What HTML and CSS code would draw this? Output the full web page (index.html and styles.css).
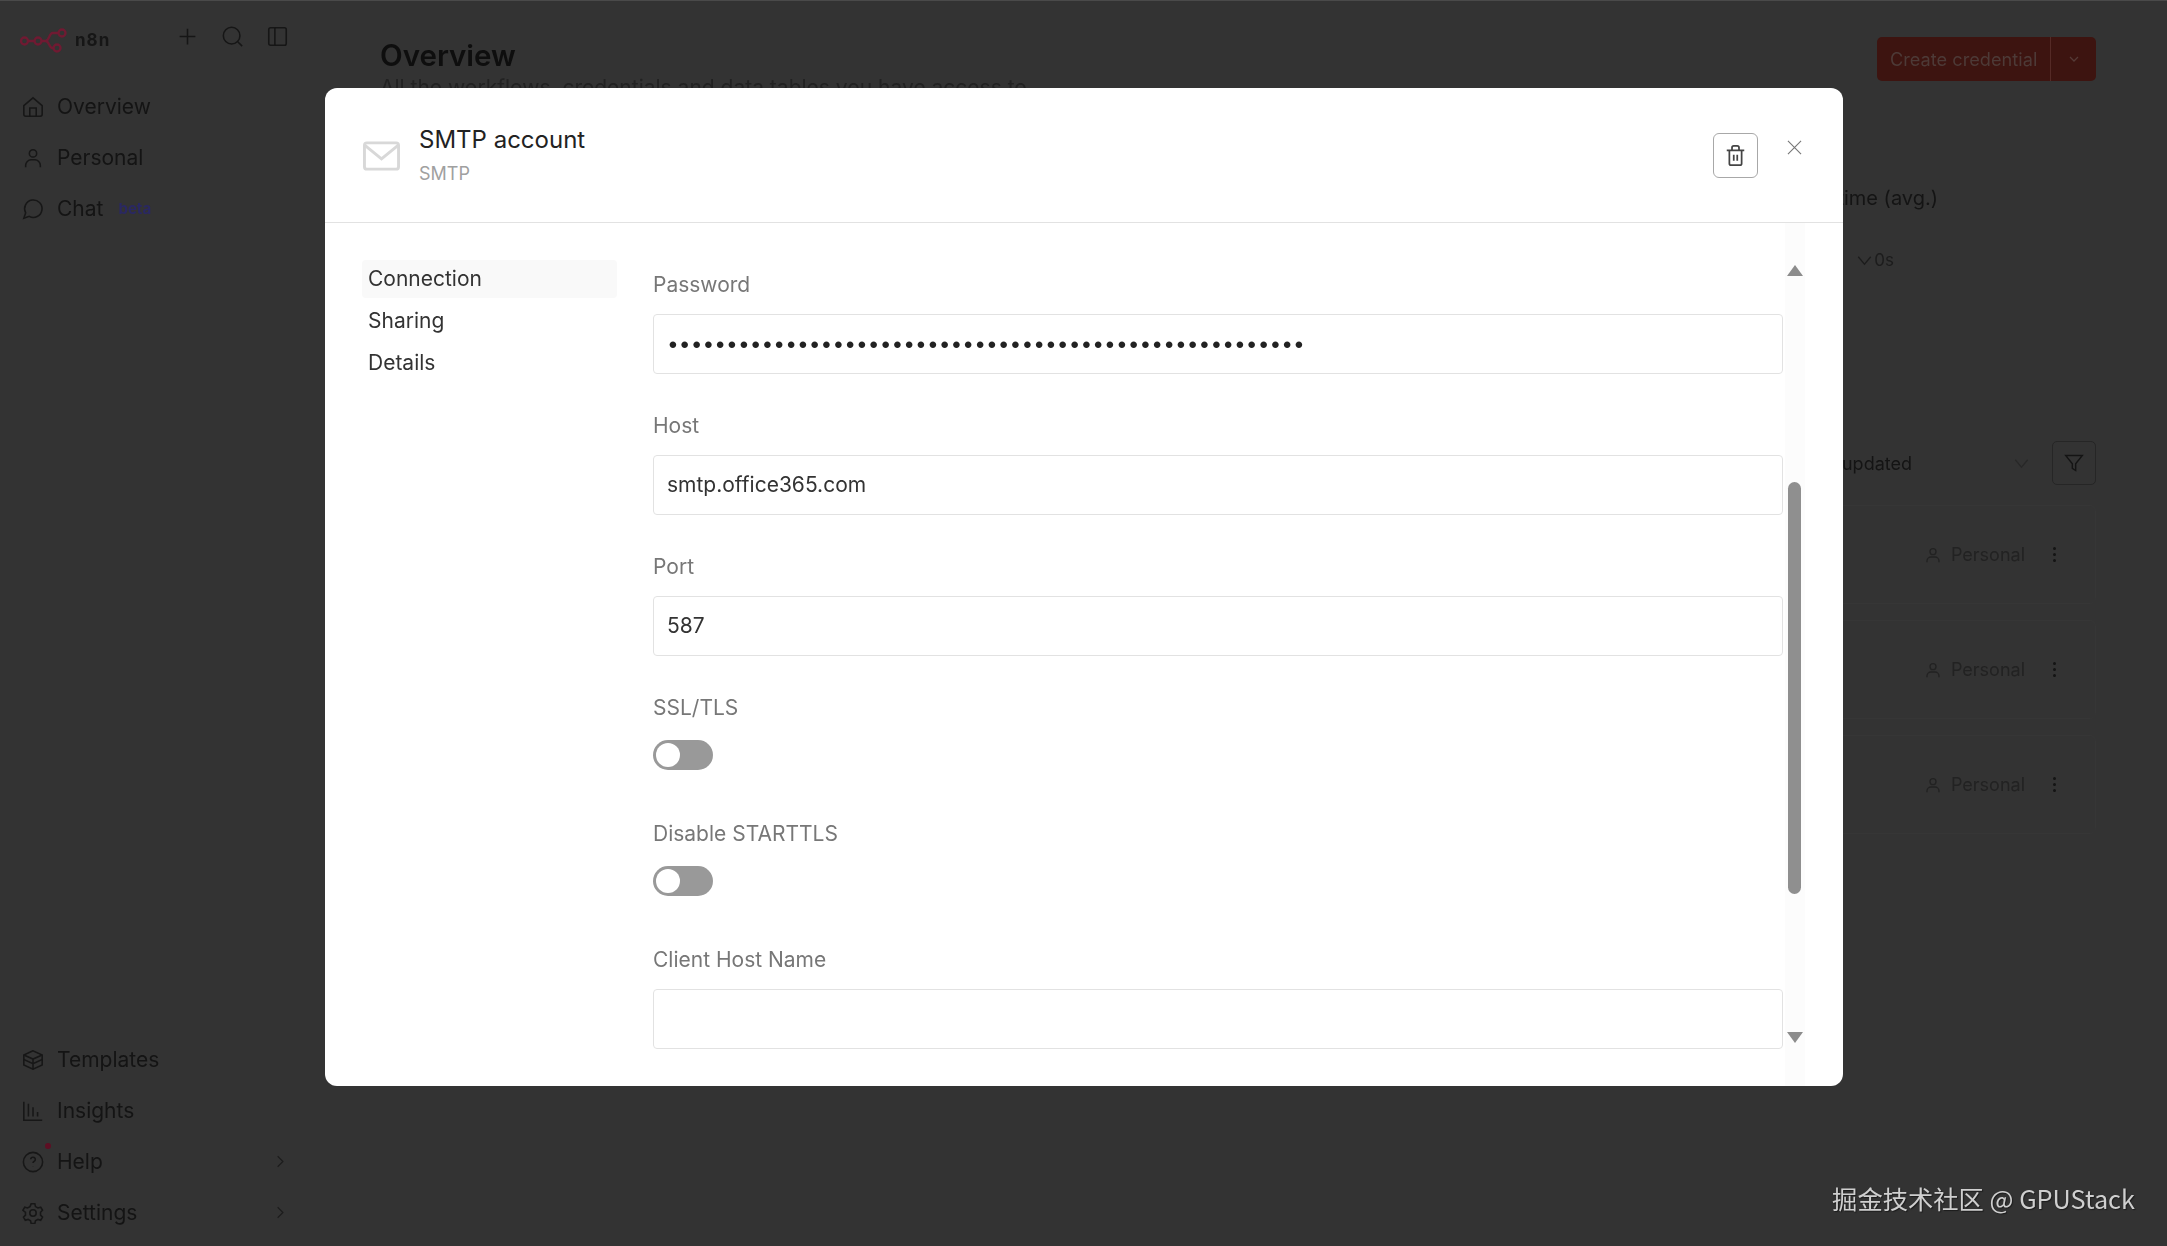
FILE: index.html
```html
<!DOCTYPE html>
<html lang="en">
<head>
<meta charset="utf-8">
<title>SMTP account</title>
<link rel="stylesheet" href="styles.css">
</head>
<body>
<div class="app">
  <aside class="sidebar">
    <div class="side-top">
      <div class="brand">
        <svg class="logo" viewBox="0 0 47 25" fill="none" stroke="#701a32" stroke-width="2.300"><circle cx="4.500" cy="13" r="3.500"/><circle cx="18" cy="13" r="3.500"/><circle cx="42" cy="5" r="3.500"/><circle cx="37" cy="20" r="3.500"/><path d="M8 13h6.500M21.500 13h4M38.500 5h-6c-3.500 0-3 8-7 8 4 0 3.500 7 7 7h1"/></svg>
        <span class="brand-name">n8n</span>
        <div class="brand-tools">
          <svg class="tool" viewBox="0 0 24 24"><path d="M12 3v18M3 12h18"/></svg>
          <svg class="tool" viewBox="0 0 24 24"><circle cx="11" cy="11" r="9.500"/><path d="M18 18l5 5"/></svg>
          <svg class="tool" viewBox="0 0 24 24"><rect x="2" y="2" width="20" height="20" rx="2"/><path d="M9 2v20"/></svg>
        </div>
      </div>
      <nav class="nav">
        <a class="nav-item"><svg class="nav-icon" viewBox="0 0 24 24"><path d="M2 10.500 12 2l10 8.500V20a2 2 0 0 1-2 2H4a2 2 0 0 1-2-2z"/><path d="M8.500 22v-9h7v9"/></svg>Overview</a>
        <a class="nav-item"><svg class="nav-icon" viewBox="0 0 24 24"><circle cx="12" cy="7" r="4"/><path d="M4 22v-2a6 6 0 0 1 6-6h4a6 6 0 0 1 6 6v2"/></svg>Personal</a>
        <a class="nav-item"><svg class="nav-icon" viewBox="0 0 24 24"><path d="M7.900 20A9.500 9.500 0 1 0 4 16.100L2 22z"/></svg>Chat<span class="beta">beta</span></a>
      </nav>
    </div>
    <nav class="nav">
      <a class="nav-item"><svg class="nav-icon" viewBox="0 0 24 24"><path d="M12 2 2 6.500v11L12 22l10-4.500v-11z"/><path d="M2 6.500 12 11l10-4.500M12 11v11M2 11.500l10 4.500 10-4.500"/></svg>Templates</a>
      <a class="nav-item"><svg class="nav-icon" viewBox="0 0 24 24"><path d="M2 2v20h20M7 4v14M12 8v10M17 13v5"/></svg>Insights</a>
      <a class="nav-item"><span class="help-wrap"><svg class="nav-icon" viewBox="0 0 24 24"><circle cx="12" cy="12" r="10.500"/><path d="M9.500 9a2.500 2.500 0 0 1 5 .5c0 1.700-2.500 2-2.500 3.500M12 17v.1"/></svg><span class="notify"></span></span>Help<svg class="nav-chevron" viewBox="0 0 24 24"><path d="m8 3 9 9-9 9"/></svg></a>
      <a class="nav-item"><svg class="nav-icon" viewBox="0 0 24 24"><circle cx="12" cy="12" r="3.500"/><path d="M10 2h4l.7 3 2.700 1.500 3-.9 2 3.400-2.200 2.200v3.100l2.200 2.200-2 3.400-3-.9-2.700 1.500-.7 3h-4l-.7-3-2.700-1.500-3 .9-2-3.400 2.200-2.200v-3.100L1 9l2-3.400 3 .9L8.700 5z"/></svg>Settings<svg class="nav-chevron" viewBox="0 0 24 24"><path d="m8 3 9 9-9 9"/></svg></a>
    </nav>
  </aside>
  <main class="main">
    <header class="page-head">
      <div>
        <h1 class="page-title">Overview</h1>
        <p class="page-sub">All the workflows, credentials and data tables you have access to</p>
      </div>
      <div class="create-btn"><span class="create-label">Create credential</span><span class="create-more"><svg class="create-chevron" viewBox="0 0 24 24"><path d="m4 8 8 8 8-8"/></svg></span></div>
    </header>
    <section class="stat">
      <div class="stat-label">Run time (avg.)</div>
      <div class="stat-value"><svg class="stat-chevron" viewBox="0 0 24 24"><path d="m2 6 10 12L22 6"/></svg>0s</div>
    </section>
    <section class="filters">
      <div class="sort"><span>Sort by last updated</span><svg class="sort-chevron" viewBox="0 0 24 24"><path d="m2 6 10 12L22 6"/></svg></div>
      <div class="filter-btn"><svg class="filter-icon" viewBox="0 0 24 24"><path d="M2 3h20l-8 10v8l-4-2.500V13z"/></svg></div>
    </section>
    <section class="rows">
      <div class="row"><svg class="row-icon" viewBox="0 0 24 24"><circle cx="12" cy="7" r="4.500"/><path d="M3 23v-2a6 6 0 0 1 6-6h6a6 6 0 0 1 6 6v2"/></svg><span class="row-text">Personal</span><span class="kebab"><i></i><i></i><i></i></span></div>
      <div class="row"><svg class="row-icon" viewBox="0 0 24 24"><circle cx="12" cy="7" r="4.500"/><path d="M3 23v-2a6 6 0 0 1 6-6h6a6 6 0 0 1 6 6v2"/></svg><span class="row-text">Personal</span><span class="kebab"><i></i><i></i><i></i></span></div>
      <div class="row"><svg class="row-icon" viewBox="0 0 24 24"><circle cx="12" cy="7" r="4.500"/><path d="M3 23v-2a6 6 0 0 1 6-6h6a6 6 0 0 1 6 6v2"/></svg><span class="row-text">Personal</span><span class="kebab"><i></i><i></i><i></i></span></div>
    </section>
  </main>
</div>

<div class="backdrop">
  <div class="modal">
    <header class="modal-head">
      <svg class="mail-icon" viewBox="0 0 38 30" fill="none"><rect x="1.500" y="1.500" width="35" height="27" rx="2.500"/><path d="m2 4 17 14L36 4"/></svg>
      <div class="modal-titles">
        <div class="modal-title">SMTP account</div>
        <div class="modal-subtitle">SMTP</div>
      </div>
      <button class="trash-btn" type="button"><svg class="trash-icon" viewBox="0 0 24 24"><path d="M2 6h20M5 6v15a2 2 0 0 0 2 2h10a2 2 0 0 0 2-2V6M8 6V3a2 2 0 0 1 2-2h4a2 2 0 0 1 2 2v3M10 11v7M14 11v7"/></svg></button>
      <svg class="close-icon" viewBox="0 0 16 16"><path d="m1 1 14 14M15 1 1 15"/></svg>
    </header>
    <div class="modal-body">
      <nav class="tabs">
        <a class="tab tab-active">Connection</a>
        <a class="tab">Sharing</a>
        <a class="tab">Details</a>
      </nav>
      <form class="form">
        <div class="field">
          <label class="label">Password</label>
          <div class="input input-secret">••••••••••••••••••••••••••••••••••••••••••••••••••••••</div>
        </div>
        <div class="field">
          <label class="label">Host</label>
          <div class="input">smtp.office365.com</div>
        </div>
        <div class="field">
          <label class="label">Port</label>
          <div class="input">587</div>
        </div>
        <div class="field field-toggle">
          <label class="label">SSL/TLS</label>
          <span class="toggle"><span class="knob"></span></span>
        </div>
        <div class="field field-toggle">
          <label class="label">Disable STARTTLS</label>
          <span class="toggle"><span class="knob"></span></span>
        </div>
        <div class="field">
          <label class="label">Client Host Name</label>
          <div class="input"></div>
        </div>
      </form>
      <div class="scrollbar">
        <span class="arrow arrow-up"></span>
        <span class="thumb"></span>
        <span class="arrow arrow-down"></span>
      </div>
    </div>
  </div>
</div>
<div class="watermark">掘金技术社区 @ GPUStack</div>
</body>
</html>
```

FILE: styles.css
```css
* { box-sizing: border-box; }
html, body { margin: 0; height: 100%; }
body {
  background: #333333;
  font-family: Inter, "Noto Sans", sans-serif;
  color: #1a1a1a;
  overflow: hidden;
  border-top: 1px solid #4a4a4a;
}
svg { display: block; }

/* Page behind the dialog */
.app {
  display: flex;
  height: 1245px;
  filter: blur(0.3px);
}
.sidebar {
  width: 305px;
  flex: none;
  display: flex;
  flex-direction: column;
  justify-content: space-between;
  padding: 0 0 8px 0;
}
.brand {
  display: flex;
  align-items: center;
  height: 80px;
  padding-left: 20px;
}
.logo { width: 47px; height: 25px; margin-top: -2px; }
.brand-name {
  margin-left: 8px;
  margin-top: -2px;
  font-size: 17px;
  font-weight: 700;
  letter-spacing: 1px;
  color: #161616;
}
.brand-tools {
  display: flex;
  gap: 24px;
  margin-left: 67px;
  margin-top: -10px;
  align-items: center;
}
.tool { width: 21px; height: 21px; fill: none; stroke: #161616; stroke-width: 1.800; }
.nav { display: flex; flex-direction: column; }
.nav-item {
  display: flex;
  align-items: center;
  height: 51px;
  padding-left: 22px;
  font-size: 21px;
  color: #141414;
}
.nav-icon {
  width: 22px;
  height: 22px;
  margin-right: 13px;
  fill: none;
  stroke: #171717;
  stroke-width: 1.700;
  flex: none;
}
.help-wrap { position: relative; display: block; }
.notify {
  position: absolute;
  left: 23px;
  top: -8px;
  width: 6px;
  height: 6px;
  border-radius: 50%;
  background: #5e0f24;
}
.nav-chevron {
  width: 14px;
  height: 17px;
  margin-left: auto;
  margin-right: 18px;
  fill: none;
  stroke: #1c1c1c;
  stroke-width: 2;
}
.beta {
  margin-left: 15px;
  font-size: 15px;
  font-weight: 700;
  color: #2a2862;
}

.main {
  flex: 1;
  min-width: 0;
  padding: 36px 71px 0 75px;
}
.page-head {
  display: flex;
  justify-content: space-between;
  height: 44px;
}
.page-title {
  margin: 0;
  font-size: 29.500px;
  font-weight: 600;
  line-height: 36px;
  color: #0e0e0e;
}
.page-sub {
  margin: 3px 0 0;
  font-size: 21px;
  line-height: 24px;
  color: #222;
  white-space: nowrap;
}
.create-btn {
  display: flex;
  align-items: center;
  width: 219px;
  height: 44px;
  border-radius: 5px;
  background: #3d1410;
}
.create-label {
  flex: 1;
  padding-left: 13px;
  font-size: 18.200px;
  color: #4d3a37;
  white-space: nowrap;
}
.create-more {
  display: flex;
  align-items: center;
  justify-content: center;
  width: 46px;
  height: 44px;
  border-left: 1px solid #552a26;
}
.create-chevron { width: 12px; height: 12px; fill: none; stroke: #553a36; stroke-width: 2.500; }
.stat {
  display: flex;
  flex-direction: column;
  align-items: flex-end;
  margin-top: 103px;
  padding-right: 158px;
}
.stat-label { font-size: 20px; line-height: 28px; color: #141414; }
.stat-value {
  display: flex;
  align-items: center;
  gap: 2px;
  margin-top: 34px;
  margin-right: 44px;
  font-size: 17px;
  line-height: 28px;
  color: #1c1c1c;
}
.stat-chevron { width: 15px; height: 15px; fill: none; stroke: #1c1c1c; stroke-width: 2; }
.filters {
  display: flex;
  justify-content: flex-end;
  align-items: center;
  gap: 12px;
  margin-top: 167px;
}
.sort {
  display: flex;
  align-items: center;
  justify-content: flex-end;
  font-size: 18px;
  color: #141414;
  white-space: nowrap;
}
.sort-chevron { width: 15px; height: 15px; margin-left: 102px; margin-right: 11px; fill: none; stroke: #282828; stroke-width: 2; }
.filter-btn {
  display: flex;
  align-items: center;
  justify-content: center;
  width: 44px;
  height: 44px;
  border: 1px solid #262626;
  border-radius: 5px;
}
.filter-icon { width: 20px; height: 20px; fill: none; stroke: #141414; stroke-width: 1.700; }
.rows {
  display: flex;
  flex-direction: column;
  gap: 16px;
  margin-top: 20px;
}
.row {
  display: flex;
  align-items: center;
  justify-content: flex-end;
  height: 99px;
  border: 1px solid #363636;
  border-radius: 6px;
  padding-right: 39px;
}
.row-icon { width: 16px; height: 16px; fill: none; stroke: #222; stroke-width: 2; }
.row-text { margin-left: 10px; margin-right: 1px; font-size: 18px; color: #222; }
.kebab {
  display: flex;
  flex-direction: column;
  gap: 3px;
  margin-left: 27px;
}
.kebab i { display: block; width: 3px; height: 3px; border-radius: 50%; background: #141414; }

/* Dialog */
.backdrop {
  position: fixed;
  inset: 0;
  display: flex;
  justify-content: center;
  align-items: flex-start;
  padding-top: 88px;
}
.modal {
  width: 1518px;
  height: 998px;
  margin-left: 1px;
  border-radius: 12px;
  background: #fff;
  overflow: hidden;
}
.modal-head {
  display: flex;
  align-items: center;
  height: 135px;
  padding: 0 41px 0 38px;
  border-bottom: 1px solid #e2e2e2;
}
.mail-icon { width: 37px; height: 30px; stroke: #d8d8d8; stroke-width: 3; margin-top: 2px; flex: none; }
.modal-titles { flex: 1; margin-left: 19px; margin-top: -2px; }
.modal-title { font-size: 24px; line-height: 34px; color: #222; }
.modal-subtitle { margin-top: 6px; font-size: 18px; line-height: 22px; color: #a0a0a0; }
.trash-btn {
  display: flex;
  align-items: center;
  justify-content: center;
  width: 45px;
  height: 45px;
  padding: 0;
  background: #fff;
  border: 1px solid #a8a8a8;
  border-radius: 6px;
}
.trash-icon { width: 21px; height: 21px; fill: none; stroke: #444; stroke-width: 2; }
.close-icon {
  width: 15px;
  height: 15px;
  margin-left: 29px;
  margin-top: -16px;
  fill: none;
  stroke: #777;
  stroke-width: 1.200;
}
.modal-body {
  position: relative;
  display: flex;
  height: 863px;
  padding: 37px 60px 0 37px;
}
.tabs {
  display: flex;
  flex-direction: column;
  width: 255px;
  flex: none;
  gap: 4px;
}
.tab {
  display: flex;
  align-items: center;
  height: 38px;
  padding-left: 6px;
  padding-bottom: 1px;
  border-radius: 4px;
  font-size: 21px;
  color: #333;
}
.tab-active { background: #f9f9f9; }
.form {
  display: flex;
  flex-direction: column;
  gap: 40px;
  width: 1130px;
  margin-left: 36px;
  padding-top: 13px;
}
.field-toggle { margin-bottom: 12px; }
.field-toggle .label { margin-bottom: 20px; }
.label {
  display: block;
  height: 24px;
  margin-bottom: 17px;
  font-size: 21px;
  line-height: 24px;
  color: #777;
}
.input {
  height: 60px;
  padding: 0 13px;
  border: 1px solid #e2e2e2;
  border-radius: 4px;
  font-size: 21px;
  line-height: 58px;
  color: #333;
}
.input-secret {
  color: #222;
  white-space: nowrap;
  overflow: hidden;
}
.toggle {
  display: block;
  position: relative;
  width: 60px;
  height: 30px;
  border-radius: 15px;
  background: #999;
}
.knob {
  position: absolute;
  left: 3px;
  top: 3px;
  width: 24px;
  height: 24px;
  border-radius: 50%;
  background: #fff;
}
.scrollbar {
  position: absolute;
  left: 1460px;
  top: 0;
  bottom: 0;
  width: 20px;
  background: #fcfcfc;
}
.arrow {
  position: absolute;
  left: 2px;
  width: 0;
  height: 0;
  border-left: 8px solid transparent;
  border-right: 8px solid transparent;
}
.arrow-up { top: 42px; border-bottom: 11px solid #8c8c8c; }
.arrow-down { top: 809px; border-top: 11px solid #8c8c8c; }
.thumb {
  position: absolute;
  left: 3px;
  top: 259px;
  width: 13px;
  height: 412px;
  border-radius: 7px;
  background: #8f8f8f;
}
.watermark {
  position: fixed;
  right: 32px;
  bottom: 31px;
  font-family: "Noto Sans CJK SC", "Noto Sans", sans-serif;
  font-size: 25.300px;
  line-height: 34px;
  color: #cfcfcf;
  text-shadow: 1px 1px 1px #1c1c1c;
  white-space: nowrap;
}
```
